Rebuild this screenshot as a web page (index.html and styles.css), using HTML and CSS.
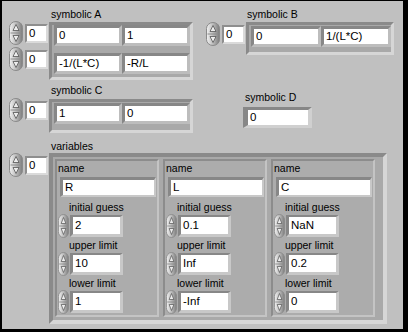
FILE: index.html
```html
<!DOCTYPE html>
<html lang="en">
<head>
    <meta charset="UTF-8">
    <meta name="viewport" content="width=device-width, initial-scale=1.0">
    <title>State Space Panel</title>
    <link rel="stylesheet" href="styles.css">
</head>
<body>
    <svg class="defs" width="0" height="0">
        <defs>
            <linearGradient id="spinFill" x1="0" y1="0" x2="1" y2="0">
                <stop offset="0" stop-color="#f2f2f2"/>
                <stop offset="0.35" stop-color="#cdcdcd"/>
                <stop offset="1" stop-color="#7c7c7c"/>
            </linearGradient>
            <symbol id="spin" viewBox="0 0 14 24" preserveAspectRatio="none">
                <rect x="0.5" y="0.5" width="13" height="23" rx="6.5" ry="6" fill="url(#spinFill)" stroke="#8a8a8a"/>
                <line x1="1.5" y1="12" x2="12.5" y2="12" stroke="#8c8c8c"/>
                <path d="M7 3.5 L10 9.5 L4 9.5 Z" fill="#ececec" stroke="#555" stroke-width="0.8"/>
                <path d="M7 20.5 L10 14.5 L4 14.5 Z" fill="#ececec" stroke="#555" stroke-width="0.8"/>
            </symbol>
        </defs>
    </svg>

    <main class="panel">
        <div class="row row-top">
            <section class="group group-a">
                <div class="label">symbolic A</div>
                <div class="body">
                    <div class="index">
                        <div class="index-ctl"><svg class="spin"><use href="#spin" width="100%" height="100%"/></svg><span class="idx">0</span></div>
                        <div class="index-ctl"><svg class="spin"><use href="#spin" width="100%" height="100%"/></svg><span class="idx">0</span></div>
                    </div>
                    <div class="array arr-a">
                        <span class="cell">0</span>
                        <span class="cell">1</span>
                        <span class="cell">-1/(L*C)</span>
                        <span class="cell">-R/L</span>
                    </div>
                </div>
            </section>

            <section class="group group-b">
                <div class="label">symbolic B</div>
                <div class="body">
                    <div class="index">
                        <div class="index-ctl"><svg class="spin"><use href="#spin" width="100%" height="100%"/></svg><span class="idx">0</span></div>
                    </div>
                    <div class="array arr-b">
                        <span class="cell">0</span>
                        <span class="cell">1/(L*C)</span>
                    </div>
                </div>
            </section>
        </div>

        <div class="row row-mid">
            <section class="group group-c">
                <div class="label">symbolic C</div>
                <div class="body">
                    <div class="index">
                        <div class="index-ctl"><svg class="spin"><use href="#spin" width="100%" height="100%"/></svg><span class="idx">0</span></div>
                    </div>
                    <div class="array arr-c">
                        <span class="cell">1</span>
                        <span class="cell">0</span>
                    </div>
                </div>
            </section>

            <section class="group group-d">
                <div class="label">symbolic D</div>
                <span class="scalar">0</span>
            </section>
        </div>

        <section class="group group-v">
            <div class="label">variables</div>
            <div class="body">
                <div class="index">
                    <div class="index-ctl"><svg class="spin"><use href="#spin" width="100%" height="100%"/></svg><span class="idx">0</span></div>
                </div>
                <div class="array arr-v">
                    <div class="cluster">
                        <div class="label">name</div>
                        <span class="name-box">R</span>
                        <div class="label sub">initial guess</div>
                        <div class="numeric"><svg class="spin small"><use href="#spin" width="100%" height="100%"/></svg><span class="val">2</span></div>
                        <div class="label sub">upper limit</div>
                        <div class="numeric"><svg class="spin small"><use href="#spin" width="100%" height="100%"/></svg><span class="val">10</span></div>
                        <div class="label sub">lower limit</div>
                        <div class="numeric"><svg class="spin small"><use href="#spin" width="100%" height="100%"/></svg><span class="val">1</span></div>
                    </div>
                    <div class="cluster">
                        <div class="label">name</div>
                        <span class="name-box">L</span>
                        <div class="label sub">initial guess</div>
                        <div class="numeric"><svg class="spin small"><use href="#spin" width="100%" height="100%"/></svg><span class="val">0.1</span></div>
                        <div class="label sub">upper limit</div>
                        <div class="numeric"><svg class="spin small"><use href="#spin" width="100%" height="100%"/></svg><span class="val">Inf</span></div>
                        <div class="label sub">lower limit</div>
                        <div class="numeric"><svg class="spin small"><use href="#spin" width="100%" height="100%"/></svg><span class="val">-Inf</span></div>
                    </div>
                    <div class="cluster">
                        <div class="label">name</div>
                        <span class="name-box">C</span>
                        <div class="label sub">initial guess</div>
                        <div class="numeric"><svg class="spin small"><use href="#spin" width="100%" height="100%"/></svg><span class="val">NaN</span></div>
                        <div class="label sub">upper limit</div>
                        <div class="numeric"><svg class="spin small"><use href="#spin" width="100%" height="100%"/></svg><span class="val">0.2</span></div>
                        <div class="label sub">lower limit</div>
                        <div class="numeric"><svg class="spin small"><use href="#spin" width="100%" height="100%"/></svg><span class="val">0</span></div>
                    </div>
                </div>
            </div>
        </section>
    </main>
</body>
</html>
```

FILE: styles.css
```css
* {
    box-sizing: border-box;
}

body {
    margin: 0;
    font-family: "Liberation Sans", Arial, sans-serif;
    color: #000;
}

.defs {
    display: block;
    width: 0;
    height: 0;
}

.panel {
    width: 408px;
    height: 332px;
    background-color: #c0c0c0;
    border: solid #000;
    border-width: 1px 5px 3px 2px;
    padding: 6px 0 0 7px;
}

.row {
    display: flex;
    align-items: flex-start;
}

.label {
    font-size: 10.5px;
    line-height: 14px;
    height: 14px;
    white-space: nowrap;
}

.body {
    display: flex;
    align-items: flex-start;
}

/* index spinners */
.index {
    display: flex;
    flex-direction: column;
    gap: 2px;
    margin-right: 1px;
}

.index-ctl {
    display: flex;
    align-items: center;
    height: 24px;
}

.spin {
    display: block;
    width: 14px;
    height: 24px;
    flex: none;
}

.idx {
    width: 23px;
    height: 19px;
    margin-left: 2px;
    background-color: #fff;
    border: 2px solid;
    border-color: #8e8e8e #dadada #dadada #8e8e8e;
    font-size: 11.5px;
    line-height: 15px;
    padding-left: 2px;
}

/* arrays */
.array {
    display: grid;
    border: 3px solid;
    border-color: #8a8a8a #d6d6d6 #d6d6d6 #8a8a8a;
    background-color: #a9a9a9;
}

.cell {
    height: 21px;
    background-color: #fff;
    border: 3px solid;
    border-color: #878787 #bdbdbd #bdbdbd #878787;
    font-size: 11.5px;
    line-height: 15px;
    padding-left: 2px;
    white-space: nowrap;
}

.group-a {
    width: 184px;
}

.group-a .label,
.group-c .label,
.group-v > .label {
    margin-left: 42px;
}

.arr-a {
    margin-top: 1px;
    grid-template-columns: 68px 68px;
    row-gap: 7px;
    padding: 0 0 3px 2px;
}

.group-b {
    margin-left: 13px;
}

.group-b .label {
    margin-left: 41px;
}

.group-b .index {
    margin-top: 1px;
}

.arr-b {
    margin-top: 1px;
    grid-template-columns: 70px 70px;
    padding: 1px 0 5px 2px;
}

.row-mid {
    margin-top: 3px;
}

.group-c {
    width: 184px;
}

.group-c .index {
    margin-top: 1px;
}

.arr-c {
    margin-top: 2px;
    grid-template-columns: 68px 68px;
    padding: 1px 0 6px 2px;
}

.group-d {
    margin-left: 50px;
    margin-top: 7px;
}

.group-d .label {
    margin-left: 2px;
}

.scalar {
    display: block;
    width: 69px;
    height: 21px;
    margin-top: 3px;
    background-color: #fff;
    border: solid;
    border-width: 3px 4px 3px 5px;
    border-color: #878787 #d0d0d0 #d0d0d0 #878787;
    font-size: 11.5px;
    line-height: 15px;
    padding-left: 2px;
}

/* variables */
.group-v {
    margin-top: 6px;
}

.arr-v {
    display: flex;
    gap: 4px;
    border-width: 4px;
    padding: 2px 8px 3px 2px;
}

.cluster {
    width: 104px;
    border: 2px solid;
    border-color: #8c8c8c #c4c4c4 #c4c4c4 #8c8c8c;
    background-color: #acacac;
    padding: 0 1px 1px 1px;
}

.name-box {
    display: block;
    width: 96px;
    height: 20px;
    margin: 2px 0 3px 2px;
    background-color: #fff;
    border: solid;
    border-width: 3px 2px 2px 3px;
    border-color: #878787 #c8c8c8 #c8c8c8 #878787;
    font-size: 11.5px;
    line-height: 15px;
    padding-left: 2px;
}

.label.sub {
    margin-left: 11px;
}

.numeric {
    display: flex;
    align-items: center;
    height: 24px;
}

.spin.small {
    width: 11px;
}

.val {
    width: 53px;
    height: 22px;
    margin-left: 1px;
    background-color: #fff;
    border: solid;
    border-width: 2px 3px 3px 3px;
    border-color: #878787 #c8c8c8 #c8c8c8 #878787;
    font-size: 11.5px;
    line-height: 17px;
    padding-left: 2px;
}
```
